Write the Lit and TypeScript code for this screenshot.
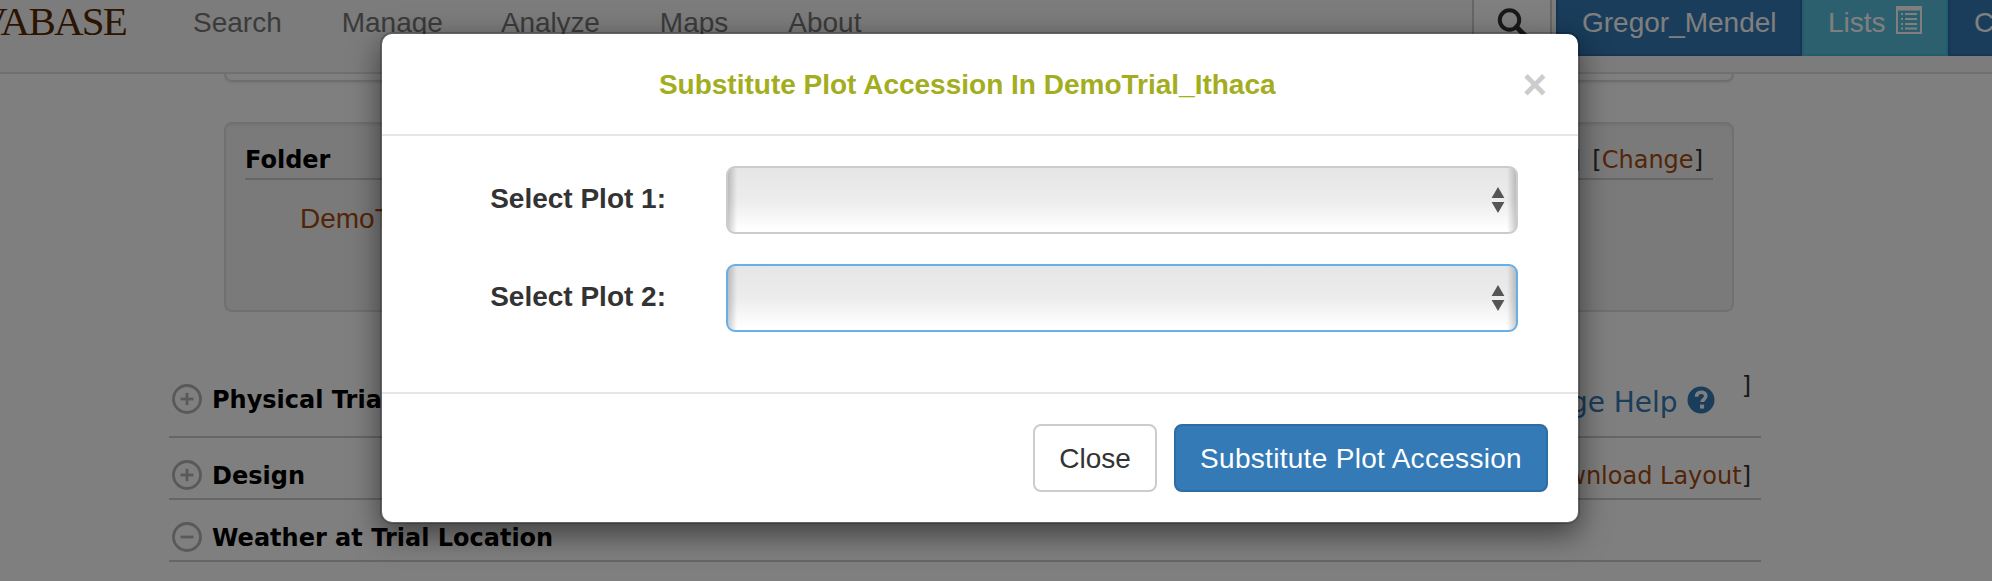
import { LitElement, html, css, svg } from "lit";
import { customElement } from "lit/decorators.js";

const NAV_ITEMS = ["Search", "Manage", "Analyze", "Maps", "About"];

const toggleIcon = (open: boolean) => html`
  <svg class="toggle" width="30" height="30" viewBox="0 0 30 30" fill="none" stroke="#b0b2b2" stroke-width="2.8">
    <circle cx="15" cy="15" r="13.5" />
    <path d="M8.5 15h13" />
    ${open ? "" : svg`<path d="M15 8.8v12.4" />`}
  </svg>
`;

@customElement("page-nav")
export class PageNav extends LitElement {
  static styles = css`
    :host {
      display: block;
      font: 28px/46px "Liberation Sans", Arial, sans-serif;
    }
    .bar {
      display: flex;
      align-items: flex-start;
      height: 72px;
      background: #f8f8f8;
      border-bottom: 2px solid #e0e0e0;
      overflow: hidden;
      white-space: nowrap;
    }
    .brand {
      display: flex;
      justify-content: flex-end;
      width: 126px;
      margin-right: 37px;
      overflow: hidden;
      font: 41px/42px "Liberation Serif", "Times New Roman", serif;
      letter-spacing: -1.8px;
      color: #562800;
    }
    .brand span {
      flex: none;
    }
    .items {
      display: flex;
    }
    .item {
      padding: 0 30px;
      color: #777;
    }
    .item:nth-child(3) {
      margin-left: -2px;
      letter-spacing: -0.1px;
    }
    .tools {
      display: flex;
      flex: none;
      margin-left: auto;
      margin-right: -108px;
    }
    .find {
      box-sizing: border-box;
      width: 80px;
      height: 56px;
      margin-right: 4px;
      padding: 7px 0 0 22px;
      border: 2px solid #ccc;
      border-top: 0;
      background: #fff;
    }
    .find svg,
    .tab svg {
      display: block;
    }
    .tab {
      box-sizing: border-box;
      display: flex;
      height: 56px;
      padding: 0 24px;
      border: 2px solid #2e6da4;
      border-top: 0;
      background: #337ab7;
      color: #fff;
    }
    .user {
      width: 246px;
    }
    .lists {
      width: 146px;
      gap: 10px;
      background: #5bc0de;
      border-color: #46b8da;
    }
    .lists svg {
      margin-top: 6px;
    }
    .calendar {
      width: 152px;
    }
  `;

  render() {
    return html`
      <nav class="bar">
        <div class="brand"><span>CASSAVABASE</span></div>
        <div class="items">${NAV_ITEMS.map((t) => html`<span class="item">${t}</span>`)}</div>
        <div class="tools">
          <div class="find">
            <svg width="32" height="32" viewBox="0 0 32 32" fill="none" stroke="#333">
              <circle cx="13.5" cy="13" r="9.7" stroke-width="4" />
              <path d="M20.5 20l8.5 8.5" stroke-width="5" stroke-linecap="round" />
            </svg>
          </div>
          <div class="tab user">Gregor_Mendel</div>
          <div class="tab lists">
            Lists
            <svg width="26" height="28" viewBox="0 0 26 28" fill="#fff">
              <path fill-rule="evenodd" d="M0 0h26v28H0zM2 4.5v21.5h22V4.5z" />
              <path d="M5 7h2v2H5zM9 7h12v2H9zM5 12h2v2H5zM9 12h12v2H9zM5 17h2v2H5zM9 17h12v2H9zM5 21.5h2v2H5zM9 21.5h12v2H9z" />
            </svg>
          </div>
          <div class="tab calendar">Calendar</div>
        </div>
      </nav>
    `;
  }
}

@customElement("trial-page")
export class TrialPage extends LitElement {
  static styles = css`
    :host {
      display: block;
      font: 24px/30px "DejaVu Sans", Verdana, sans-serif;
      color: #333;
      white-space: nowrap;
    }
    .content {
      width: 1592px;
      margin-left: 169px;
    }
    .panel-end {
      box-sizing: border-box;
      height: 8px;
      margin: 0 27px 40px 55px;
      border: 2px solid #ddd;
      border-top: 0;
      border-radius: 0 0 8px 8px;
      box-shadow: 0 2px 2px rgba(0, 0, 0, 0.05);
    }
    .well {
      box-sizing: border-box;
      height: 190px;
      margin: 0 27px 50px 55px;
      padding: 21px 19px;
      border: 2px solid #e0e0e0;
      border-radius: 8px;
      background: #f5f5f5;
      box-shadow: inset 0 2px 2px rgba(0, 0, 0, 0.05);
    }
    .well-head {
      display: flex;
      height: 33px;
      padding-right: 10px;
      border-bottom: 2px solid #ccc;
    }
    .well-head .title {
      margin-right: auto;
    }
    .action {
      margin-left: 12px;
    }
    .title {
      font-weight: bold;
      color: #000;
    }
    .link {
      color: #a64a10;
    }
    .folder {
      margin: 18px 0 0 55px;
      font: 28px/42px "Liberation Sans", Arial, sans-serif;
      color: #a64a10;
    }
    .section {
      box-sizing: border-box;
      display: flex;
      align-items: flex-start;
      height: 62px;
      padding: 23px 10px 0 3px;
      border-bottom: 2px solid #ccc;
    }
    .section.tall {
      height: 76px;
    }
    .toggle {
      flex: none;
      margin: -1px 10px 0 0;
    }
    .side {
      display: flex;
      align-items: flex-start;
      margin-left: auto;
    }
    .help {
      display: flex;
      align-items: flex-start;
      margin-right: 27px;
      font-size: 28px;
      gap: 9px;
      color: #337ab7;
    }
    .help-text {
      margin-top: 3px;
    }
    .help svg {
      margin-top: 1px;
    }
    .high {
      margin-top: -14px;
    }
  `;

  render() {
    return html`
      <main class="content">
        <div class="panel-end"></div>
        <section class="well">
          <div class="well-head">
            <span class="title">Folder</span>
            <span class="action">[<span class="link">View</span>]</span>
            <span class="action">[<span class="link">Change</span>]</span>
          </div>
          <div class="folder">DemoTrials</div>
        </section>
        <div class="section tall">
          ${toggleIcon(false)}
          <span class="title">Physical Trial Layout</span>
          <div class="side">
            <span class="help">
              <span class="help-text">Page Help</span>
              <svg width="28" height="28" viewBox="0 0 28 28">
                <circle cx="14" cy="14" r="13.5" fill="#337ab7" />
                <path d="M9.5 10.8c0-3 2-4.6 4.7-4.6 2.6 0 4.6 1.5 4.6 3.9 0 3.3-3.7 3.4-3.7 6" fill="none" stroke="#fff" stroke-width="3.6" />
                <path d="M13 18.6h4.1v4H13z" fill="#fff" />
              </svg>
            </span>
            <span class="high">]</span>
          </div>
        </div>
        <div class="section">
          ${toggleIcon(false)}
          <span class="title">Design</span>
          <div class="side"><span>[<span class="link">Download Layout</span>]</span></div>
        </div>
        <div class="section">
          ${toggleIcon(true)}
          <span class="title">Weather at Trial Location</span>
        </div>
      </main>
    `;
  }
}

@customElement("substitute-dialog")
export class SubstituteDialog extends LitElement {
  static styles = css`
    :host {
      box-sizing: border-box;
      display: block;
      width: 1200px;
      border: 2px solid rgba(0, 0, 0, 0.2);
      border-radius: 12px;
      background: #fff;
      background-clip: padding-box;
      box-shadow: 0 10px 30px rgba(0, 0, 0, 0.5);
      font: 28px/42px "Liberation Sans", Arial, sans-serif;
      color: #333;
      white-space: nowrap;
    }
    .header {
      box-sizing: border-box;
      display: flex;
      height: 102px;
      padding: 30px 31px 0 30px;
      border-bottom: 2px solid #e5e5e5;
    }
    .heading {
      flex: 1;
      text-align: center;
      font-weight: bold;
      color: #a2ad20;
    }
    .dismiss {
      font-weight: bold;
      font-size: 42px;
      line-height: 42px;
      color: #ccc;
    }
    .body {
      box-sizing: border-box;
      display: grid;
      grid-template-columns: 284px 792px;
      grid-auto-rows: 68px;
      gap: 30px 60px;
      height: 256px;
      padding-top: 30px;
    }
    .label {
      margin-top: 12px;
      text-align: right;
      font-weight: bold;
    }
    .select {
      box-sizing: border-box;
      display: flex;
      justify-content: flex-end;
      align-items: center;
      padding-right: 11px;
      border: 2px solid #ccc;
      border-radius: 9px;
      background:
        linear-gradient(90deg, rgba(0, 0, 0, 0.2), transparent 9px, transparent calc(100% - 9px), rgba(0, 0, 0, 0.2)),
        linear-gradient(#e6e6e6, #ececec 50%, #fff 95%);
    }
    .select.focused {
      border-color: #66afe9;
    }
    .footer {
      display: flex;
      justify-content: flex-end;
      gap: 17px;
      padding: 30px;
      border-top: 2px solid #e5e5e5;
    }
    .button {
      box-sizing: border-box;
      width: 124px;
      height: 68px;
      margin: 0;
      padding: 2px 0 0;
      border: 2px solid #ccc;
      border-radius: 8px;
      background: #fff;
      font: inherit;
      line-height: normal;
      color: #333;
    }
    .button.primary {
      width: 374px;
      border-color: #2e6da4;
      background: #337ab7;
      letter-spacing: 0.3px;
      color: #fff;
    }
  `;

  private field(label: string, focused: boolean) {
    return html`
      <div class="label">${label}</div>
      <div class="select ${focused ? "focused" : ""}">
        <svg width="14" height="26" viewBox="0 0 14 26" fill="#555">
          <path d="M7 0l6.4 11H.6zM.6 15h12.8L7 26z" />
        </svg>
      </div>
    `;
  }

  render() {
    return html`
      <div class="header">
        <div class="heading">Substitute Plot Accession In DemoTrial_Ithaca</div>
        <div class="dismiss">×</div>
      </div>
      <div class="body">
        ${this.field("Select Plot 1:", false)} ${this.field("Select Plot 2:", true)}
      </div>
      <div class="footer">
        <button class="button">Close</button>
        <button class="button primary">Substitute Plot Accession</button>
      </div>
    `;
  }
}

@customElement("app-root")
export class AppRoot extends LitElement {
  static styles = css`
    :host {
      display: block;
      position: relative;
      height: 581px;
      overflow: hidden;
      background: #fff;
    }
    .backdrop {
      position: absolute;
      inset: 0;
      display: flex;
      align-items: flex-start;
      padding: 32px 0 0 380px;
      background: rgba(0, 0, 0, 0.5);
    }
  `;

  render() {
    return html`
      <page-nav></page-nav>
      <trial-page></trial-page>
      <div class="backdrop"><substitute-dialog></substitute-dialog></div>
    `;
  }
}
